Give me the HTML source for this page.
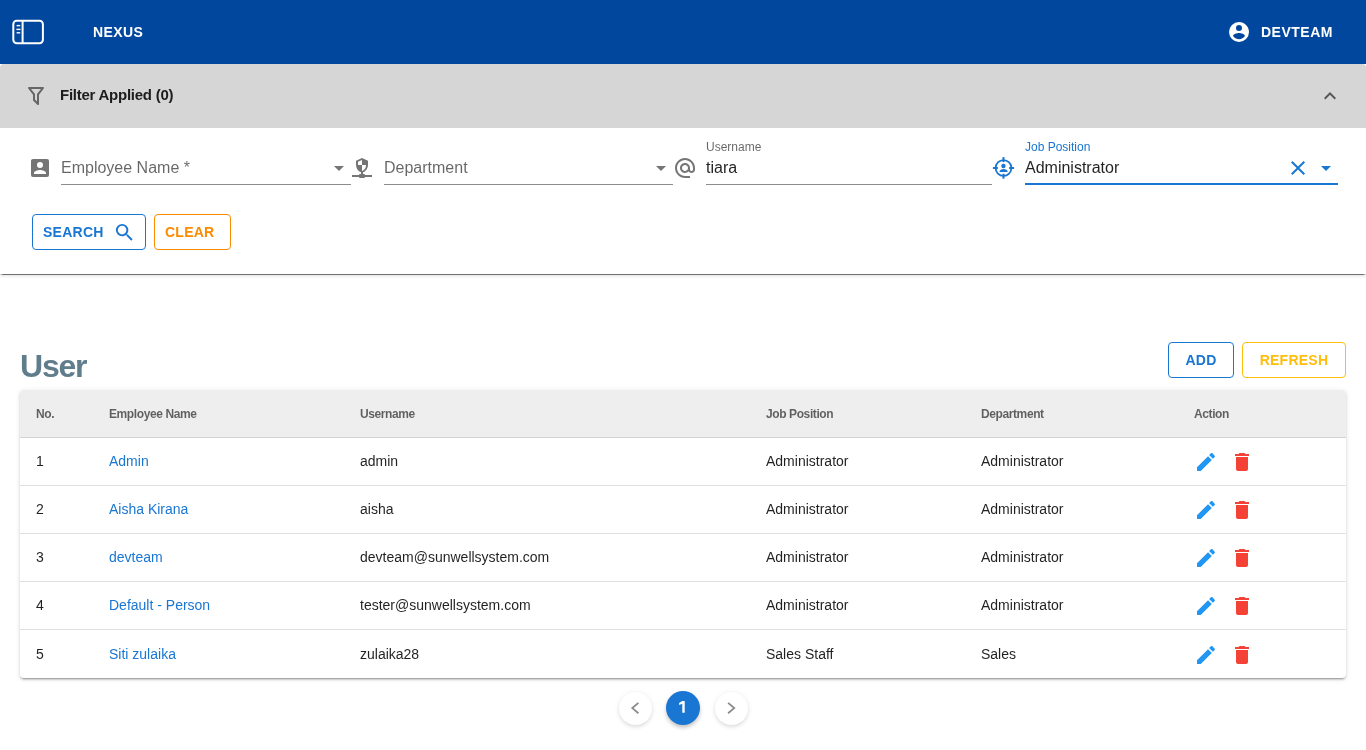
<!DOCTYPE html>
<html><head><meta charset="utf-8">
<style>
*{box-sizing:border-box;margin:0;padding:0}
html,body{will-change:transform;width:1366px;height:750px;overflow:hidden;background:#fff;font-family:"Liberation Sans",sans-serif;color:rgba(0,0,0,.87)}
.abs{position:absolute}
svg{display:block}
#bar{position:absolute;left:0;top:0;width:1366px;height:64px;background:#01479d}
.btxt{position:absolute;color:#fff;font-weight:bold;font-size:14px;letter-spacing:1.25px;line-height:16px}
#fhead{position:absolute;left:0;top:64px;width:1366px;height:64px;background:#d6d6d6;border-radius:4px 4px 0 0}
#form{position:absolute;left:0;top:128px;width:1366px;height:146px;background:#fff;box-shadow:0 2px 3px rgba(0,0,0,.12)}
#fline{position:absolute;left:0;top:274px;width:1366px;height:1px;background:linear-gradient(to right,rgba(112,112,112,0) 0,#707070 3px,#707070 1363px,rgba(112,112,112,0) 1366px)}
.ul{position:absolute;height:1px;background:#8c8c8c}
.lbl{position:absolute;font-size:16px;line-height:20px;color:rgba(0,0,0,.6);white-space:nowrap}
.val{position:absolute;font-size:16px;line-height:20px;color:rgba(0,0,0,.87);white-space:nowrap}
.sm{position:absolute;font-size:12px;line-height:14px;white-space:nowrap;color:rgba(0,0,0,.6)}
.obtn{position:absolute;height:36px;border:1px solid;border-radius:4px;font-weight:bold;font-size:14px;letter-spacing:0.25px;line-height:34px;white-space:nowrap}
#tbl{position:absolute;left:20px;top:390px;width:1326px;height:288px;background:#fff;border-radius:4px;box-shadow:0 3px 1px -2px rgba(0,0,0,.2),0 2px 2px 0 rgba(0,0,0,.14),0 1px 5px 0 rgba(0,0,0,.12);overflow:hidden}
#thead{position:absolute;left:0;top:0;width:1326px;height:48px;background:#eee;border-bottom:1px solid #d3d3d3}
.th{position:absolute;top:17px;font-size:12px;font-weight:bold;line-height:14px;letter-spacing:-0.4px;color:rgba(0,0,0,.6);white-space:nowrap}
.row{position:absolute;left:0;width:1326px;height:48px;border-bottom:1px solid #e0e0e0}
.td{position:absolute;top:14px;font-size:14px;line-height:18px;white-space:nowrap;color:rgba(0,0,0,.87)}
.lnk{color:#1976d2}
.pg{position:absolute;border-radius:50%;background:#fff;box-shadow:0 2px 4px -1px rgba(0,0,0,.12),0 1px 6px 0 rgba(0,0,0,.08)}
</style></head>
<body>
<div id="bar">
  <svg class="abs" style="left:12px;top:19px" width="33" height="27" viewBox="0 0 33 27">
    <rect x="1.3" y="1.8" width="29.6" height="22.4" rx="3.4" fill="none" stroke="#fff" stroke-width="2"/>
    <rect x="9.6" y="1.8" width="2" height="22.4" fill="#fff"/>
    <rect x="4.6" y="5.9" width="3.6" height="1.4" fill="#fff"/>
    <rect x="4.4" y="9.7" width="4.1" height="1.4" fill="#fff"/>
    <rect x="4.6" y="13.1" width="3.6" height="1.4" fill="#fff"/>
  </svg>
  <div class="btxt" style="left:93px;top:24px;letter-spacing:0.4px">NEXUS</div>
  <svg class="abs" style="left:1227px;top:20px" width="24" height="24" viewBox="0 0 24 24"><path fill="#fff" d="M12,19.2C9.5,19.2 7.29,17.92 6,16C6.03,14 10,12.9 12,12.9C14,12.9 17.97,14 18,16C16.71,17.92 14.5,19.2 12,19.2M12,5A3,3 0 0,1 15,8A3,3 0 0,1 12,11A3,3 0 0,1 9,8A3,3 0 0,1 12,5M12,2A10,10 0 0,0 2,12A10,10 0 0,0 12,22A10,10 0 0,0 22,12C22,6.47 17.5,2 12,2Z"/></svg>
  <div class="btxt" style="left:1261px;top:24px;letter-spacing:0.5px">DEVTEAM</div>
</div>

<div id="fhead">
  <svg class="abs" style="left:24px;top:20px" width="24" height="24" viewBox="0 0 24 24"><path fill="#666" d="M15,19.88C15.04,20.18 14.94,20.5 14.71,20.71C14.32,21.1 13.69,21.1 13.3,20.71L9.29,16.7C9.06,16.47 8.96,16.16 9,15.87V10.75L4.21,4.62C3.87,4.19 3.95,3.56 4.38,3.22C4.57,3.08 4.78,3 5,3V3H19V3C19.22,3 19.43,3.08 19.62,3.22C20.05,3.56 20.13,4.19 19.79,4.62L15,10.75V19.88M7.04,5L11,10.06V15.58L13,17.58V10.05L16.96,5H7.04Z"/></svg>
  <div class="abs" style="left:60px;top:22px;font-size:15px;font-weight:bold;line-height:18px;letter-spacing:-0.25px;color:rgba(0,0,0,.87)">Filter Applied (0)</div>
  <svg class="abs" style="left:1318px;top:20px" width="24" height="24" viewBox="0 0 24 24"><path fill="#555" d="M7.41,15.41L12,10.83L16.59,15.41L18,14L12,8L6,14L7.41,15.41Z"/></svg>
</div>

<div id="form">
  <!-- Employee name -->
  <svg class="abs" style="left:28px;top:28px" width="24" height="24" viewBox="0 0 24 24"><path fill="#757575" d="M6,17C6,15 10,14 12,14C14,14 18,15 18,17V18H6M15,9A3,3 0 0,1 12,12A3,3 0 0,1 9,9A3,3 0 0,1 12,6A3,3 0 0,1 15,9M3,5V19A2,2 0 0,0 5,21H19A2,2 0 0,0 21,19V5A2,2 0 0,0 19,3H5C3.89,3 3,3.9 3,5Z"/></svg>
  <div class="lbl" style="left:61px;top:30px">Employee Name *</div>
  <svg class="abs" style="left:327px;top:28px" width="24" height="24" viewBox="0 0 24 24"><path fill="#757575" d="M7,10L12,15L17,10H7Z"/></svg>
  <div class="ul" style="left:61px;top:56px;width:290px"></div>

  <!-- Department -->
  <svg class="abs" style="left:350px;top:28px" width="24" height="24" viewBox="0 0 24 24"><path fill="#757575" d="M13,18H14A1,1 0 0,1 15,19H22V21H15A1,1 0 0,1 14,22H10A1,1 0 0,1 9,21H2V19H9A1,1 0 0,1 10,18H11V16.34C8.07,15.13 6,12 6,8.67V4.67L12,2L18,4.67V8.67C18,12 15.93,15.13 13,16.34V18M12,4L8,5.69V9H12V4M12,9V15C13.91,14.53 16,11.92 16,9.7V9H12Z"/></svg>
  <div class="lbl" style="left:384px;top:30px">Department</div>
  <svg class="abs" style="left:649px;top:28px" width="24" height="24" viewBox="0 0 24 24"><path fill="#757575" d="M7,10L12,15L17,10H7Z"/></svg>
  <div class="ul" style="left:384px;top:56px;width:289px"></div>

  <!-- Username -->
  <svg class="abs" style="left:673px;top:28px" width="24" height="24" viewBox="0 0 24 24"><path fill="#757575" d="M12 1.95c-5.52 0-10 4.48-10 10s4.48 10 10 10h5v-2h-5c-4.34 0-8-3.66-8-8s3.66-8 8-8 8 3.66 8 8v1.43c0 .79-.71 1.57-1.5 1.57s-1.5-.78-1.5-1.57v-1.43c0-2.76-2.24-5-5-5s-5 2.24-5 5 2.24 5 5 5c1.38 0 2.64-.56 3.54-1.47.65.89 1.77 1.47 2.960 1.47 1.97 0 3.5-1.6 3.5-3.57v-1.430c0-5.52-4.48-10-10-10zm0 13c-1.66 0-3-1.34-3-3s1.34-3 3-3 3 1.34 3 3-1.34 3-3 3z"/></svg>
  <div class="sm" style="left:706px;top:12px">Username</div>
  <div class="val" style="left:706px;top:30px">tiara</div>
  <div class="ul" style="left:706px;top:56px;width:286px"></div>

  <!-- Job position -->
  <svg class="abs" style="left:988px;top:24px" width="32" height="32" viewBox="0 0 32 32">
    <circle cx="15.5" cy="16" r="7.9" fill="none" stroke="#1976d2" stroke-width="1.8"/>
    <rect x="14.5" y="5.1" width="2" height="5" fill="#1976d2"/>
    <rect x="14.5" y="21.8" width="2" height="4.9" fill="#1976d2"/>
    <rect x="4.9" y="15" width="5" height="2" fill="#1976d2"/>
    <rect x="21.1" y="15" width="5" height="2" fill="#1976d2"/>
    <circle cx="15.45" cy="14" r="2.2" fill="#1976d2"/>
    <path fill="#1976d2" d="M11.5,19.9C11.5,18 13.8,17.1 15.6,17.1C17.4,17.1 19.7,18 19.7,19.9Z"/>
  </svg>
  <div class="sm" style="left:1025px;top:12px;color:#1976d2">Job Position</div>
  <div class="val" style="left:1025px;top:30px">Administrator</div>
  <svg class="abs" style="left:1286px;top:28px" width="24" height="24" viewBox="0 0 24 24"><path fill="#1976d2" d="M19,6.41L17.59,5L12,10.59L6.41,5L5,6.41L10.59,12L5,17.59L6.41,19L12,13.41L17.59,19L19,17.59L13.41,12L19,6.41Z"/></svg>
  <svg class="abs" style="left:1314px;top:28px" width="24" height="24" viewBox="0 0 24 24"><path fill="#1976d2" d="M7,10L12,15L17,10H7Z"/></svg>
  <div class="ul" style="left:1025px;top:55px;width:313px;height:2px;background:#1976d2"></div>

  <!-- Buttons -->
  <div class="obtn" style="left:32px;top:86px;width:114px;color:#1976d2;border-color:#1976d2;padding-left:10px">SEARCH
    <svg class="abs" style="left:80px;top:6px" width="23" height="23" viewBox="0 0 24 24"><path fill="#1976d2" d="M9.5,3A6.5,6.5 0 0,1 16,9.5C16,11.11 15.41,12.59 14.44,13.73L14.71,14H15.5L20.5,19L19,20.5L14,15.5V14.71L13.730,14.44C12.59,15.41 11.11,16 9.5,16A6.5,6.5 0 0,1 3,9.5A6.5,6.5 0 0,1 9.5,3M9.5,5C7,5 5,7 5,9.5C5,12 7,14 9.5,14C12,14 14,12 14,9.5C14,7 12,5 9.5,5Z"/></svg>
  </div>
  <div class="obtn" style="left:154px;top:86px;width:77px;color:#fb8c00;border-color:#fb8c00;padding-left:10px">CLEAR</div>
</div>

<div id="fline"></div>
<div class="abs" style="left:20px;top:347px;font-size:32px;font-weight:bold;line-height:38px;letter-spacing:-1.2px;color:#607d8b">User</div>
<div class="obtn" style="left:1168px;top:342px;width:66px;color:#1976d2;border-color:#1976d2;text-align:center">ADD</div>
<div class="obtn" style="left:1242px;top:342px;width:104px;color:#ffbd0c;border-color:#ffbd0c;text-align:center">REFRESH</div>

<div id="tbl">
  <div id="thead">
    <div class="th" style="left:16px">No.</div>
    <div class="th" style="left:89px">Employee Name</div>
    <div class="th" style="left:340px">Username</div>
    <div class="th" style="left:746px">Job Position</div>
    <div class="th" style="left:961px">Department</div>
    <div class="th" style="left:1174px">Action</div>
  </div>
    <div class="row" style="top:48px">
    <div class="td" style="left:16px">1</div>
    <div class="td lnk" style="left:89px">Admin</div>
    <div class="td" style="left:340px">admin</div>
    <div class="td" style="left:746px">Administrator</div>
    <div class="td" style="left:961px">Administrator</div>
    <svg class="abs" style="left:1174px;top:12px" width="24" height="24" viewBox="0 0 24 24"><path fill="#2196f3" d="M20.71,7.04C21.1,6.65 21.1,6 20.71,5.63L18.37,3.29C18,2.9 17.35,2.9 16.96,3.29L15.12,5.12L18.87,8.87M3,17.25V21H6.75L17.81,9.93L14.06,6.18L3,17.25Z"/></svg>
    <svg class="abs" style="left:1210px;top:12px" width="24" height="24" viewBox="0 0 24 24"><path fill="#f44336" d="M19,4H15.5L14.5,3H9.5L8.5,4H5V6H19M6,19A2,2 0 0,0 8,21H16A2,2 0 0,0 18,19V7H6V19Z"/></svg>
  </div>
  <div class="row" style="top:96px">
    <div class="td" style="left:16px">2</div>
    <div class="td lnk" style="left:89px">Aisha Kirana</div>
    <div class="td" style="left:340px">aisha</div>
    <div class="td" style="left:746px">Administrator</div>
    <div class="td" style="left:961px">Administrator</div>
    <svg class="abs" style="left:1174px;top:12px" width="24" height="24" viewBox="0 0 24 24"><path fill="#2196f3" d="M20.71,7.04C21.1,6.65 21.1,6 20.71,5.63L18.37,3.29C18,2.9 17.35,2.9 16.96,3.29L15.12,5.12L18.87,8.87M3,17.25V21H6.75L17.81,9.93L14.06,6.18L3,17.25Z"/></svg>
    <svg class="abs" style="left:1210px;top:12px" width="24" height="24" viewBox="0 0 24 24"><path fill="#f44336" d="M19,4H15.5L14.5,3H9.5L8.5,4H5V6H19M6,19A2,2 0 0,0 8,21H16A2,2 0 0,0 18,19V7H6V19Z"/></svg>
  </div>
  <div class="row" style="top:144px">
    <div class="td" style="left:16px">3</div>
    <div class="td lnk" style="left:89px">devteam</div>
    <div class="td" style="left:340px">devteam@sunwellsystem.com</div>
    <div class="td" style="left:746px">Administrator</div>
    <div class="td" style="left:961px">Administrator</div>
    <svg class="abs" style="left:1174px;top:12px" width="24" height="24" viewBox="0 0 24 24"><path fill="#2196f3" d="M20.71,7.04C21.1,6.65 21.1,6 20.71,5.63L18.37,3.29C18,2.9 17.35,2.9 16.96,3.29L15.12,5.12L18.87,8.87M3,17.25V21H6.75L17.81,9.93L14.06,6.18L3,17.25Z"/></svg>
    <svg class="abs" style="left:1210px;top:12px" width="24" height="24" viewBox="0 0 24 24"><path fill="#f44336" d="M19,4H15.5L14.5,3H9.5L8.5,4H5V6H19M6,19A2,2 0 0,0 8,21H16A2,2 0 0,0 18,19V7H6V19Z"/></svg>
  </div>
  <div class="row" style="top:192px">
    <div class="td" style="left:16px">4</div>
    <div class="td lnk" style="left:89px">Default - Person</div>
    <div class="td" style="left:340px">tester@sunwellsystem.com</div>
    <div class="td" style="left:746px">Administrator</div>
    <div class="td" style="left:961px">Administrator</div>
    <svg class="abs" style="left:1174px;top:12px" width="24" height="24" viewBox="0 0 24 24"><path fill="#2196f3" d="M20.71,7.04C21.1,6.65 21.1,6 20.71,5.63L18.37,3.29C18,2.9 17.35,2.9 16.96,3.29L15.12,5.12L18.87,8.87M3,17.25V21H6.75L17.81,9.93L14.06,6.18L3,17.25Z"/></svg>
    <svg class="abs" style="left:1210px;top:12px" width="24" height="24" viewBox="0 0 24 24"><path fill="#f44336" d="M19,4H15.5L14.5,3H9.5L8.5,4H5V6H19M6,19A2,2 0 0,0 8,21H16A2,2 0 0,0 18,19V7H6V19Z"/></svg>
  </div>
  <div class="row" style="top:241px;border-bottom:none">
    <div class="td" style="left:16px">5</div>
    <div class="td lnk" style="left:89px">Siti zulaika</div>
    <div class="td" style="left:340px">zulaika28</div>
    <div class="td" style="left:746px">Sales Staff</div>
    <div class="td" style="left:961px">Sales</div>
    <svg class="abs" style="left:1174px;top:12px" width="24" height="24" viewBox="0 0 24 24"><path fill="#2196f3" d="M20.71,7.04C21.1,6.65 21.1,6 20.71,5.63L18.37,3.29C18,2.9 17.35,2.9 16.96,3.29L15.12,5.12L18.87,8.87M3,17.25V21H6.75L17.81,9.93L14.06,6.18L3,17.25Z"/></svg>
    <svg class="abs" style="left:1210px;top:12px" width="24" height="24" viewBox="0 0 24 24"><path fill="#f44336" d="M19,4H15.5L14.5,3H9.5L8.5,4H5V6H19M6,19A2,2 0 0,0 8,21H16A2,2 0 0,0 18,19V7H6V19Z"/></svg>
  </div>
</div>

<div class="pg" style="left:619px;top:692px;width:33px;height:33px">
  <svg class="abs" style="left:0;top:0" width="33" height="33" viewBox="0 0 33 33"><path fill="none" stroke="#8a8a8a" stroke-width="1.8" d="M19.4,10.9L13.3,16.1L19.4,21.3"/></svg>
</div>
<div class="pg" style="left:666px;top:691px;width:34px;height:34px;box-shadow:0 3px 5px -1px rgba(0,0,0,.2),0 2px 4px 0 rgba(0,0,0,.1);background:#1976d2;color:#fff;font-size:16px;line-height:34px;text-align:center"><svg class="abs" style="left:0;top:0" width="34" height="34" viewBox="0 0 34 34"><path fill="#fff" d="M16.3,10.1H18.7V21.8H16.3V12.8L13.1,13.9V12.1Z"/></svg></div>
<div class="pg" style="left:715px;top:692px;width:33px;height:33px">
  <svg class="abs" style="left:0;top:0" width="33" height="33" viewBox="0 0 33 33"><path fill="none" stroke="#8a8a8a" stroke-width="1.8" d="M13.1,10.9L19.2,16.1L13.1,21.3"/></svg>
</div>
</body></html>
